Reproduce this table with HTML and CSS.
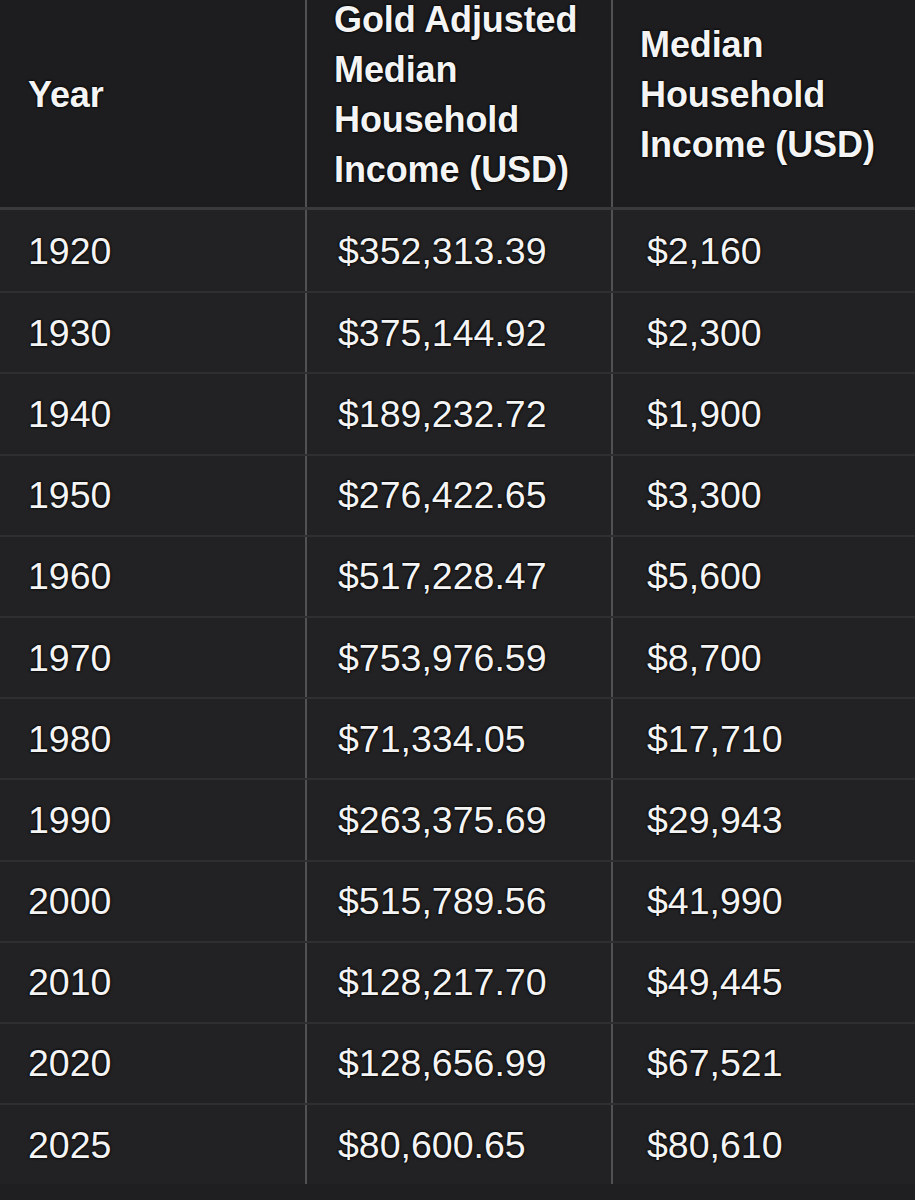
FILE: index.html
```html
<!DOCTYPE html>
<html lang="en">
<head>
<meta charset="utf-8">
<title>Gold Adjusted Median Household Income</title>
<link rel="stylesheet" href="styles.css">
</head>
<body>
<div class="table">
  <div class="row head">
    <div class="cell c1">Year</div>
    <div class="cell c2">Gold Adjusted<br>Median<br>Household<br>Income (USD)</div>
    <div class="cell c3">Median<br>Household<br>Income (USD)</div>
  </div>
  <div class="row"><div class="cell c1">1920</div><div class="cell c2">$352,313.39</div><div class="cell c3">$2,160</div></div>
  <div class="row"><div class="cell c1">1930</div><div class="cell c2">$375,144.92</div><div class="cell c3">$2,300</div></div>
  <div class="row"><div class="cell c1">1940</div><div class="cell c2">$189,232.72</div><div class="cell c3">$1,900</div></div>
  <div class="row"><div class="cell c1">1950</div><div class="cell c2">$276,422.65</div><div class="cell c3">$3,300</div></div>
  <div class="row"><div class="cell c1">1960</div><div class="cell c2">$517,228.47</div><div class="cell c3">$5,600</div></div>
  <div class="row"><div class="cell c1">1970</div><div class="cell c2">$753,976.59</div><div class="cell c3">$8,700</div></div>
  <div class="row"><div class="cell c1">1980</div><div class="cell c2">$71,334.05</div><div class="cell c3">$17,710</div></div>
  <div class="row"><div class="cell c1">1990</div><div class="cell c2">$263,375.69</div><div class="cell c3">$29,943</div></div>
  <div class="row"><div class="cell c1">2000</div><div class="cell c2">$515,789.56</div><div class="cell c3">$41,990</div></div>
  <div class="row"><div class="cell c1">2010</div><div class="cell c2">$128,217.70</div><div class="cell c3">$49,445</div></div>
  <div class="row"><div class="cell c1">2020</div><div class="cell c2">$128,656.99</div><div class="cell c3">$67,521</div></div>
  <div class="row"><div class="cell c1">2025</div><div class="cell c2">$80,600.65</div><div class="cell c3">$80,610</div></div>
</div>
</body>
</html>
```
FILE: styles.css
```css
html, body {
  margin: 0;
  padding: 0;
  background: #1f1f21;
}
body {
  width: 915px;
  height: 1200px;
  overflow: hidden;
  font-family: "Liberation Sans", Arial, sans-serif;
  color: #f4f4f4;
}
.table {
  margin-top: -18px;
  display: flex;
  flex-direction: column;
}
.row {
  display: grid;
  grid-template-columns: 305px 306px 1fr;
  height: 81.2px;
  box-sizing: border-box;
  border-top: 2px solid #2f2f31;
  background: #222224;
}
.row.head {
  height: 228px;
  border-top: none;
  border-bottom: 3px solid #3a3a3c;
  background: #1d1d1f;
}
.row.head + .row {
  border-top: none;
}
.cell {
  display: flex;
  align-items: center;
  font-size: 37.5px;
  line-height: 44px;
  text-shadow: 0 0 2px #000, 0 0 3px #000;
  padding-left: 28px;
  box-sizing: border-box;
}
.row .c2 {
  border-left: 2px solid #515153;
  padding-left: 31px;
}
.row .c3 {
  border-left: 2px solid #515153;
  padding-left: 34px;
}
.head .cell {
  font-weight: bold;
  font-size: 36px;
  line-height: 50px;
  padding-left: 28px;
  letter-spacing: -0.1px;
}
.head .c2, .head .c3 {
  padding-left: 27px;
}
```
